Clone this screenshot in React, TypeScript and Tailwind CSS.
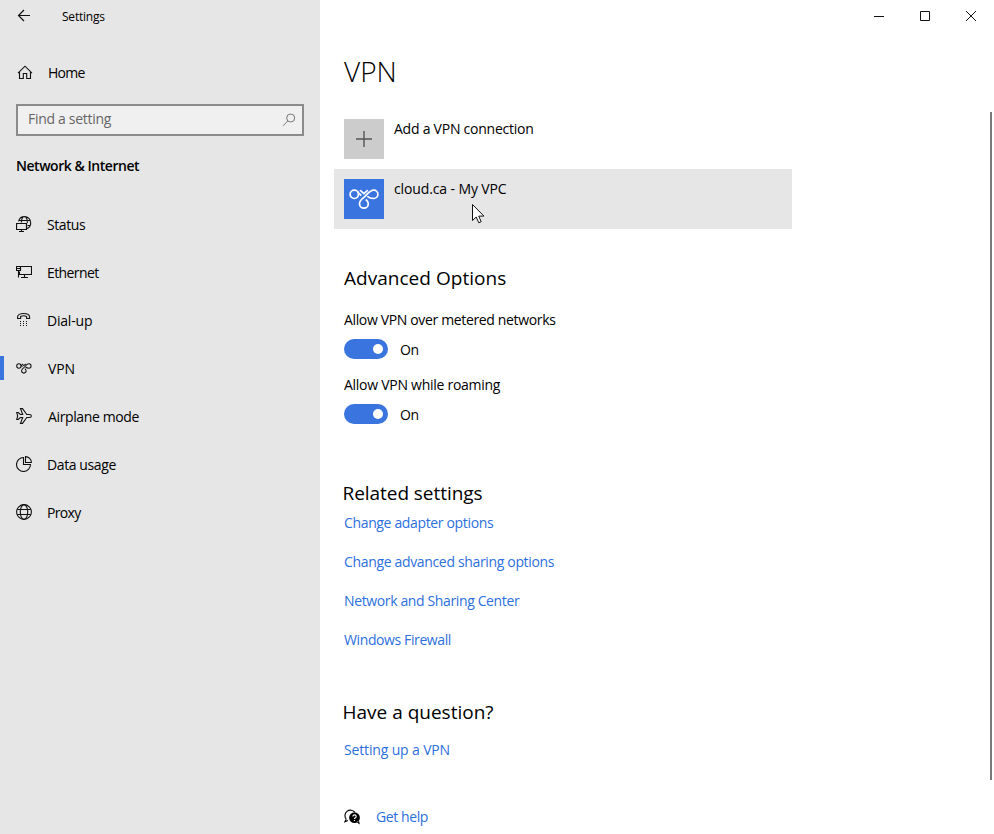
import type { ReactNode } from "react";

function Icon({ children }: { children: ReactNode }) {
  return (
    <svg width="16" height="16" viewBox="0 0 16 16" fill="none" stroke="#111" strokeWidth="1.1" className="block shrink-0">
      {children}
    </svg>
  );
}

const StatusIcon = () => (
  <Icon>
    <path d="M2.600 5.500C3.200 2.500 5.700.600 8.500.600a6.200 6.200 0 0 1 6.200 6.400c0 2.800-1.600 4.800-3.700 5.600M7 .9C5.800 2 5.500 4 5.400 6.500M9.700.9c1.300 1.400 1.700 3.800 1.700 6.100M3 4.500h11.300M11.500 9.500h3" />
    <path d="M.5 7.500h10v6H.5zM5.500 13.500v2M3 15.500h5" strokeWidth="1.2" />
  </Icon>
);

const EthernetIcon = () => (
  <Icon>
    <path d="M5 2.500h10.500v8h-12V7.500M8.500 10.500v3M5 13.500h7M2.500 6.500v7" strokeWidth="1.1" />
    <path d="M.5 2.500h4v4h-4zM1 4.500h3" strokeWidth="1.2" />
  </Icon>
);

const DialIcon = () => (
  <Icon>
    <path d="M1.600 6.500V5c0-2 2.500-3.500 6-3.500s6 1.500 6 3.500v1.500h-3v-2c-1.500-.7-4.500-.7-6 0v2z" />
    <path d="M4 9.500h1M7 9.500h1M10 9.500h1M4 11.500h1M7 11.500h1M10 11.500h1M7 13.500h1M4 13.500h1M10 13.500h1" />
  </Icon>
);

function Knot() {
  return (
    <>
      <circle cx="10.300" cy="15.300" r="4.200" />
      <path d="M13.500 12.500c1.300 1.700 2.500 3 3.800 4.200" />
      <path d="M23.300 17.300c1.800 1.500 4 2.200 6.400 2.200a4.200 4.200 0 1 0 0-8.400c-4.300 0-6.200 4.300-9.800 7.300-2.600 2-4.400 3.400-4.400 6.300a4.400 4.400 0 1 0 8.800 0c0-1.900-1-3-2.500-4.200" />
      <path d="M16 11.200l3.900 3.400 3.900-3.400" />
    </>
  );
}

const VpnIcon = () => (
  <svg width="16" height="16" viewBox="4.700 3.700 31 31" fill="none" stroke="#111" strokeWidth="2" className="block shrink-0">
    <Knot />
  </svg>
);

const AirplaneIcon = () => (
  <Icon>
    <path d="M.7 4.500h1.600l2 2h2.400L4.500.6h2l4.300 5.900h2.600c2.600 0 2.600 3 0 3h-2.600L6.500 15.400h-2l2.200-5.900H4.300l-2 2H.7L1.700 8z" />
  </Icon>
);

const DataIcon = () => (
  <Icon>
    <path d="M7.500 1.500a7 7 0 1 0 7 7h-7z" />
    <path d="M9.500.6v5.900h5.900C15.400 3.200 12.800.6 9.500.6z" />
  </Icon>
);

const GlobeIcon = () => (
  <Icon>
    <circle cx="8" cy="8" r="7.400" />
    <ellipse cx="8" cy="8" rx="3.700" ry="7.400" />
    <path d="M1.300 5.500h13.400M1.300 10.500h13.400" />
  </Icon>
);

const nav = [
  { label: "Status", icon: <StatusIcon />, cls: "pl-[15px] tracking-[-0.4px]" },
  { label: "Ethernet", icon: <EthernetIcon />, cls: "pl-[15px] tracking-[-0.6px]" },
  { label: "Dial-up", icon: <DialIcon />, cls: "pl-[15px] tracking-[-0.2px]" },
  { label: "VPN", icon: <VpnIcon />, cls: "pl-4 tracking-[-0.1px]", active: true },
  { label: "Airplane mode", icon: <AirplaneIcon />, cls: "pl-4 tracking-[-0.38px]" },
  { label: "Data usage", icon: <DataIcon />, cls: "pl-[15px] tracking-[-0.4px]" },
  { label: "Proxy", icon: <GlobeIcon />, cls: "pl-[15px] tracking-[-0.65px]" },
];

const links = [
  { label: "Change adapter options", cls: "tracking-[-0.35px]" },
  { label: "Change advanced sharing options", cls: "tracking-[-0.34px]" },
  { label: "Network and Sharing Center", cls: "tracking-[-0.37px]" },
  { label: "Windows Firewall", cls: "tracking-[-0.39px]" },
];

function Toggle({ label, tracking }: { label: string; tracking: string }) {
  return (
    <div className="h-[65px]">
      <div className={tracking}>{label}</div>
      <div className="mt-[9px] flex h-5 items-center">
        <div className="flex h-5 w-11 items-center justify-end rounded-full bg-[#3a74de] pr-[5px]">
          <div className="size-2.5 rounded-full bg-white" />
        </div>
        <span className="ml-3 pt-0.5 tracking-[-0.4px]">On</span>
      </div>
    </div>
  );
}

export default function App() {
  return (
    <div className="flex h-[834px] w-[994px] overflow-hidden bg-white font-['Open_Sans',sans-serif] text-sm leading-5 text-black">
      <aside className="w-80 shrink-0 bg-[#e6e6e6]">
        <div className="flex h-8 items-center pl-4">
          <Icon><path d="M14 7.500H2.500M8 2L2.500 7.500 8 13" strokeWidth="1.200" /></Icon>
          <span className="ml-[30px] pt-0.5 text-xs tracking-[-0.22px]">Settings</span>
        </div>
        <div className="mt-[31px] flex h-5 items-center pl-[17px]">
          <Icon><path d="M1 8.200L8 1.200l7 7M2.500 7v6.500h3.800V8.500h3.400v5h3.800V7" /></Icon>
          <span className="ml-[15px] tracking-[-0.7px]">Home</span>
        </div>
        <div className="mx-4 mt-[21px] flex h-8 items-center justify-between border-2 border-[#8b8b8b] bg-[#f0f0f0] pr-1.5 pl-2.5 text-[#666]">
          <span className="pb-0.5 tracking-[-0.3px]">Find a setting</span>
          <svg width="14" height="14" viewBox="0 0 14 14" fill="none" stroke="#777"><circle cx="8.700" cy="5" r="4" /><path d="M5.900 7.900L1 12.800" /></svg>
        </div>
        <div className="mt-5 pl-4 font-semibold tracking-[-0.47px]">Network &amp; Internet</div>
        <nav className="mt-[25px]">
          {nav.map((n) => (
            <div key={n.label} className="flex h-12 items-center">
              <div className={n.active ? "mb-0.5 h-6 w-1 bg-[#3a74de]" : "mb-0.5 h-6 w-1"} />
              <div className="mb-0.5 ml-3">{n.icon}</div>
              <div className={n.cls}>{n.label}</div>
            </div>
          ))}
        </nav>
      </aside>
      <main className="flex-1">
        <div className="flex h-8 items-center justify-end pr-[17px]">
          <svg width="104" height="12" viewBox="0 0 104 12" fill="none" stroke="#111"><path d="M1 6.500h10M47.500 1.500h9v9h-9zM93 1l10 10M103 1L93 11" /></svg>
        </div>
        <div className="flex">
          <div className="w-[670px] pl-6">
            <h1 className="mt-[19px] text-[28px] leading-10 font-light">VPN</h1>
            <div className="mt-[18px] -ml-2.5 flex h-[60px] w-[458px] gap-2.5 p-2.5">
              <div className="flex size-10 items-center justify-center bg-[#ccc]">
                <svg width="16" height="16" stroke="#555" strokeWidth="1.400"><path d="M8 0v16M0 8h16" /></svg>
              </div>
              <div className="tracking-[-0.24px]">Add a VPN connection</div>
            </div>
            <div className="relative -ml-2.5 flex h-[60px] w-[458px] gap-2.5 bg-[#e6e6e6] p-2.5">
              <svg width="40" height="40" viewBox="0 0 40 40" fill="none" stroke="#fff" strokeWidth="1.700" className="bg-[#3a74de]"><Knot /></svg>
              <div className="tracking-[-0.12px]">cloud.ca - My VPC</div>
              <svg width="14" height="20" viewBox="0 0 14 20" className="absolute top-[35px] left-[138px]">
                <path d="M.5.500v16l3.700-3.500 2.600 5.800 2.400-1.100-2.500-5.600h5.200z" fill="#fff" stroke="#111" />
              </svg>
            </div>
            <h2 className="mt-[35px] text-[19px] leading-[28px] tracking-[0.03px]">Advanced Options</h2>
            <div className="mt-[18px]">
              <Toggle label="Allow VPN over metered networks" tracking="tracking-[-0.35px]" />
              <Toggle label="Allow VPN while roaming" tracking="tracking-[-0.27px]" />
            </div>
            <h2 className="mt-[39px] -ml-[1.500px] text-[19px] leading-[28px] tracking-[-0.05px]">Related settings</h2>
            <div className="mt-1.5 flex flex-col gap-[19px] text-[#2d6fdc]">
              {links.map((l) => <a key={l.label} className={l.cls}>{l.label}</a>)}
            </div>
            <h2 className="mt-12 -ml-[1.500px] text-[19px] leading-[28px]">Have a question?</h2>
            <div className="mt-3.5 tracking-[-0.15px] text-[#2d6fdc]">Setting up a VPN</div>
            <div className="mt-[47px] flex items-center gap-4 text-[#2d6fdc]">
              <Icon>
                <path d="M2.200 10.200L.8 12.800l3.200-1.200M2.200 10.200a5.200 5.200 0 1 1 8.600-7" stroke="#000" />
                <path d="M10.500 3.300a5.400 5.400 0 1 1 0 10.800 5.400 5.400 0 0 1 0-10.800zM12.500 13.200l3.300 2.300-.8-4z" fill="#000" stroke="none" />
                <path d="M8.900 7.400c0-2.100 3.300-2 3.300 0 0 1.300-1.700 1.300-1.700 2.600M10.500 10.900v1.200" stroke="#fff" />
              </Icon>
              <span className="tracking-[-0.4px]">Get help</span>
            </div>
          </div>
          <div className="mt-20 h-[668px] w-0.5 bg-[#7a7a7a]" />
        </div>
      </main>
    </div>
  );
}
